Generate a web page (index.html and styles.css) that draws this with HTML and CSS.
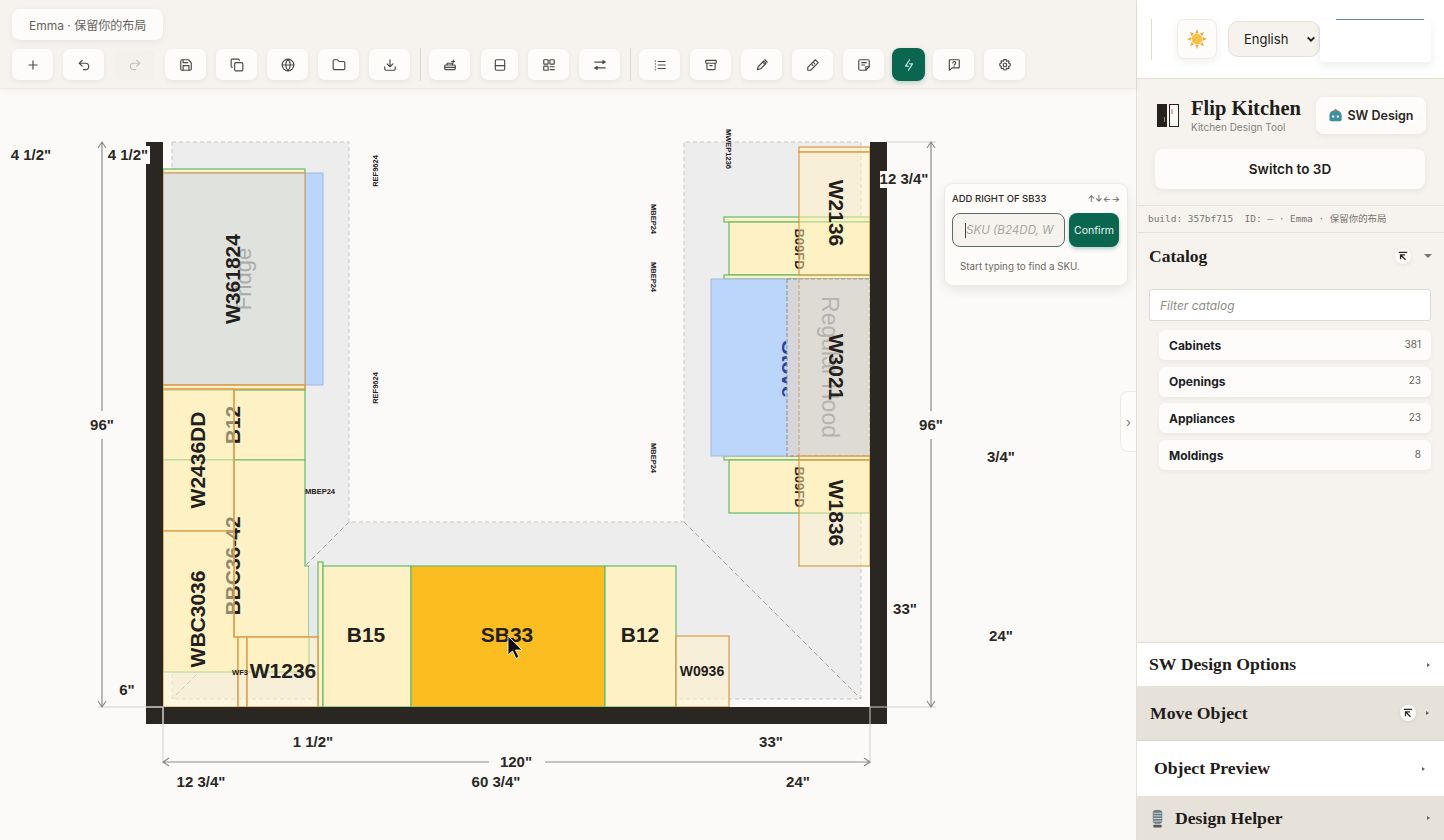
FILE: index.html
```html
<!DOCTYPE html>
<html lang="en">
<head>
  <meta charset="UTF-8">
  <meta name="viewport" content="width=device-width, initial-scale=1.0">
  <title>Flip Kitchen</title>
  <link rel="stylesheet" href="styles.css">
</head>
<body>
  <div class="app">
    <div class="workspace">
      <!-- top toolbar -->
      <header class="topbar">
        <div class="project__pill">Emma · 保留你的布局</div>
        <div class="toolbar">
          <button class="tool" type="button"><svg viewBox="0 0 24 24"><path d="M12 5v14M5 12h14"/></svg></button>
          <button class="tool" type="button"><svg viewBox="0 0 24 24"><path d="M9 14 4 9l5-5"/><path d="M4 9h10.5a5.5 5.5 0 0 1 0 11H11"/></svg></button>
          <button class="tool tool--off" type="button"><svg viewBox="0 0 24 24"><path d="m15 14 5-5-5-5"/><path d="M20 9H9.5a5.5 5.5 0 0 0 0 11H13"/></svg></button>
          <button class="tool" type="button"><svg viewBox="0 0 24 24"><path d="M5 3h11l5 5v11a2 2 0 0 1-2 2H5a2 2 0 0 1-2-2V5a2 2 0 0 1 2-2z"/><path d="M17 21v-8H7v8M7 3v5h8"/></svg></button>
          <button class="tool" type="button"><svg viewBox="0 0 24 24"><rect x="8" y="8" width="14" height="14" rx="2"/><path d="M4 16a2 2 0 0 1-2-2V4a2 2 0 0 1 2-2h10a2 2 0 0 1 2 2"/></svg></button>
          <button class="tool" type="button"><svg viewBox="0 0 24 24"><circle cx="12" cy="12" r="10"/><path d="M2 12h20M12 2a15 15 0 0 1 0 20 15 15 0 0 1 0-20"/></svg></button>
          <button class="tool" type="button"><svg viewBox="0 0 24 24"><path d="M20 20a2 2 0 0 0 2-2V8a2 2 0 0 0-2-2h-8L9.5 3H4a2 2 0 0 0-2 2v13a2 2 0 0 0 2 2z"/></svg></button>
          <button class="tool" type="button"><svg viewBox="0 0 24 24"><path d="M21 15v4a2 2 0 0 1-2 2H5a2 2 0 0 1-2-2v-4"/><path d="m7 10 5 5 5-5M12 15V3"/></svg></button>
          <span class="toolbar__sep"></span>
          <button class="tool" type="button"><svg viewBox="0 0 24 24"><rect x="3" y="12" width="18" height="8" rx="1.5"/><path d="M3 16h18M7 12V9h9v3M15 6h5M17.500 3.500v5"/></svg></button>
          <button class="tool tool--narrow" type="button"><svg viewBox="0 0 24 24"><rect x="4" y="3" width="16" height="18" rx="2"/><path d="M4 13h16"/></svg></button>
          <button class="tool tool--mid" type="button"><svg viewBox="0 0 24 24"><rect x="3" y="3" width="7.500" height="7.500" rx="1"/><rect x="13.500" y="3" width="7.500" height="7.500" rx="1"/><rect x="3" y="14" width="7.500" height="7" rx="1"/><path d="M14 15h7M14 20h7"/></svg></button>
          <button class="tool" type="button"><svg viewBox="0 0 24 24"><path d="M3 7h15M21 7l-4-2.500v5zM21 17H6M3 17l4-2.500v5z"/></svg></button>
          <span class="toolbar__sep"></span>
          <button class="tool" type="button"><svg viewBox="0 0 24 24"><path d="M9 6h12M9 12h12M9 18h12"/><path class="dot" d="M4 4v2M4 9v2M4 14v2M4 19v2"/></svg></button>
          <button class="tool" type="button"><svg viewBox="0 0 24 24"><rect x="3" y="4" width="18" height="5" rx="1.500"/><path d="M5 9v9a2 2 0 0 0 2 2h10a2 2 0 0 0 2-2V9M10 13h4"/></svg></button>
          <button class="tool" type="button"><svg viewBox="0 0 24 24"><path d="M4 20l1.500-5L15 5l4 4-9.500 9.500z"/><path d="M13 7l4 4M17 3l4 4"/></svg></button>
          <button class="tool" type="button"><svg viewBox="0 0 24 24"><path d="M16 3l5 5L8 21H3v-5z"/><path d="M13 8l2 2M10 11l2 2"/></svg></button>
          <button class="tool" type="button"><svg viewBox="0 0 24 24"><path d="M5 3h14a2 2 0 0 1 2 2v10l-6 6H5a2 2 0 0 1-2-2V5a2 2 0 0 1 2-2z"/><path d="M15 21v-6h6M8 8h8M8 12h5"/></svg></button>
          <button class="tool tool--active" type="button"><svg viewBox="0 0 24 24"><path d="M13 3 6 14h5M11 21l7-11h-5"/></svg></button>
          <button class="tool" type="button"><svg viewBox="0 0 24 24"><path d="M5 3h15a1 1 0 0 1 1 1v12a1 1 0 0 1-1 1H9l-5 4V4a1 1 0 0 1 1-1z"/><path d="M10 8.500a2.500 2.500 0 1 1 3 2.500l-.8 1M12.200 14.500h.1"/></svg></button>
          <button class="tool" type="button"><svg viewBox="0 0 24 24"><circle cx="12" cy="12" r="3"/><path d="M12 2.500l2 .4.800 2.600 2.500-.9 1.600 1.400-.9 2.500 2.600.9.400 2.100-.4 2.100-2.600.9.900 2.500-1.600 1.400-2.500-.9-.8 2.600-2 .4-2-.4-.8-2.600-2.500.9-1.600-1.400.9-2.500-2.600-.9-.4-2.100.4-2.100 2.600-.9-.9-2.500 1.600-1.400 2.500.9.800-2.600z"/></svg></button>
        </div>
      </header>

      <!-- floor plan -->
      <main class="canvas">
        <svg class="plan" viewBox="0 88 1136 752" width="1136" height="752">
          <!-- room shape -->
          <path class="room" d="M172 141H349V521H684V141H861V698H172Z"/>
          <path class="room__diag" d="M349 521 172 698M684 521 861 698"/>

          <!-- base cabinets -->
          <rect class="base" x="163" y="168" width="142" height="221"/>
          <rect class="base" x="163" y="389" width="142" height="70"/>
          <path class="base" d="M163 459H305V565H309V671H163Z"/>
          <rect class="gap" x="309" y="565" width="9" height="71"/>
          <rect class="base" x="318" y="561" width="5" height="145"/>
          <rect class="base" x="323" y="565" width="88" height="141"/>
          <rect class="base base--picked" x="411" y="565" width="194" height="141"/>
          <rect class="base" x="605" y="565" width="71" height="141"/>
          <rect class="base" x="724" y="216" width="146" height="5"/>
          <rect class="base" x="729" y="221" width="141" height="53"/>
          <rect class="base" x="724" y="274" width="146" height="4"/>
          <rect class="base" x="724" y="455" width="146" height="4"/>
          <rect class="base" x="729" y="459" width="141" height="53"/>

          <!-- fridge and stove -->
          <rect class="appliance" x="163" y="172" width="160" height="212"/>
          <rect class="appliance" x="711" y="278" width="159" height="177"/>
          <text class="lbl lbl--stove" transform="translate(789 368) rotate(90)">Stove</text>

          <!-- labels under wall cabinets -->
          <text class="lbl" transform="translate(232 424) rotate(-90)">B12</text>
          <text class="lbl" transform="translate(232 565) rotate(-90)">BBC36-42</text>
          <text class="lbl lbl--sm" transform="translate(799 248) rotate(90)">B09FD</text>
          <text class="lbl lbl--sm" transform="translate(799 486) rotate(90)">B09FD</text>

          <!-- hood -->
          <rect class="hood" x="787" y="278" width="83" height="177"/>

          <!-- wall cabinets -->
          <rect class="wall-cab wall-cab--grey" x="163" y="172" width="142" height="212"/>
          <rect class="wall-cab" x="163" y="384" width="142" height="4"/>
          <rect class="wall-cab" x="163" y="388" width="71" height="142"/>
          <path class="wall-cab" d="M163 530H234V636H238V706H163Z"/>
          <path class="wall-cab wall-cab--line" d="M234 388V636H318"/>
          <rect class="wall-cab" x="238" y="636" width="9" height="70"/>
          <rect class="wall-cab" x="247" y="636" width="71" height="70"/>
          <rect class="wall-cab" x="676" y="635" width="53" height="71"/>
          <rect class="wall-cab" x="799" y="146" width="71" height="5"/>
          <rect class="wall-cab" x="799" y="151" width="71" height="123"/>
          <rect class="wall-cab wall-cab--hood" x="799" y="278" width="71" height="177"/>
          <rect class="wall-cab" x="799" y="455" width="71" height="4"/>
          <rect class="wall-cab" x="799" y="459" width="71" height="106"/>

          <!-- appliance labels show through -->
          <text class="lbl lbl--fridge" transform="translate(243 278) rotate(-90)">Fridge</text>
          <text class="lbl lbl--hood" transform="translate(830 366) rotate(90)">Regular Hood</text>
          <circle class="spark" cx="829" cy="359" r="2.500"/>

          <!-- cabinet labels -->
          <text class="lbl" transform="translate(232 278) rotate(-90)">W361824</text>
          <text class="lbl" transform="translate(197 459) rotate(-90)">W2436DD</text>
          <text class="lbl" transform="translate(197 618) rotate(-90)">WBC3036</text>
          <text class="lbl" x="283" y="669">W1236</text>
          <text class="lbl lbl--xs" x="240" y="671">WF3</text>
          <text class="lbl" x="366" y="633">B15</text>
          <text class="lbl" x="507" y="633">SB33</text>
          <text class="lbl" x="640" y="633">B12</text>
          <text class="lbl lbl--mid" x="702" y="670">W0936</text>
          <text class="lbl" transform="translate(836 212) rotate(90)">W2136</text>
          <text class="lbl" transform="translate(836 366) rotate(90)">W3021</text>
          <text class="lbl" transform="translate(836 512) rotate(90)">W1836</text>

          <!-- moldings -->
          <text class="lbl lbl--xs" transform="translate(375 170) rotate(-90)">REF9624</text>
          <text class="lbl lbl--xs" transform="translate(375 387) rotate(-90)">REF9624</text>
          <text class="lbl lbl--xs" transform="translate(653 218) rotate(90)">MBEP24</text>
          <text class="lbl lbl--xs" transform="translate(653 276) rotate(90)">MBEP24</text>
          <text class="lbl lbl--xs" transform="translate(653 457) rotate(90)">MBEP24</text>
          <text class="lbl lbl--xs" transform="translate(728 148) rotate(90)">MWEP1236</text>
          <text class="lbl lbl--xs" x="320" y="490">MBEP24</text>

          <!-- walls -->
          <path class="walls" d="M146 141H163V706H870V141H887V723H146Z"/>
          <path class="ext" d="M98 706H163M163 706V723M146 706H163M870 706H887M870 706V763M163 706V763M887 141H936M887 706H936"/>

          <!-- dimension lines -->
          <path class="dim" d="M102 142V410M102 438V706M98 147l4-6 4 6M98 700l4 6 4-6"/>
          <path class="dim" d="M931 142V410M931 438V706M927 147l4-6 4 6M927 700l4 6 4-6"/>
          <path class="dim" d="M163 761H489M545 761H870M169 757l-6 4 6 4M864 757l6 4-6 4"/>

          <text class="dimtxt" x="31" y="153">4 1/2"</text>
          <rect class="dimbg" x="106" y="145" width="44" height="18"/>
          <text class="dimtxt" x="128" y="153">4 1/2"</text>
          <text class="dimtxt" x="102" y="423">96"</text>
          <text class="dimtxt" x="127" y="688">6"</text>
          <text class="dimtxt" x="313" y="740">1 1/2"</text>
          <text class="dimtxt" x="771" y="740">33"</text>
          <text class="dimtxt" x="516" y="760">120"</text>
          <text class="dimtxt" x="201" y="780">12 3/4"</text>
          <text class="dimtxt" x="496" y="780">60 3/4"</text>
          <text class="dimtxt" x="798" y="780">24"</text>
          <rect class="dimbg" x="880" y="170" width="48" height="17"/>
          <text class="dimtxt" x="904" y="177">12 3/4"</text>
          <text class="dimtxt" x="931" y="423">96"</text>
          <text class="dimtxt" x="1001" y="455">3/4"</text>
          <text class="dimtxt" x="905" y="607">33"</text>
          <text class="dimtxt" x="1001" y="634">24"</text>

          <!-- cursor -->
          <path class="cursor" d="M508 635V654L512.500 650 516 657.500 519 656 515.500 649H522Z"/>
        </svg>

        <!-- add next to popup -->
        <div class="addbox">
          <div class="addbox__head">
            <span>ADD RIGHT OF SB33</span>
            <span class="addbox__keys">↑↓←→</span>
          </div>
          <div class="addbox__row">
            <div class="addbox__input"><i></i><span>SKU (B24DD, W</span></div>
            <button class="addbox__btn" type="button">Confirm</button>
          </div>
          <div class="addbox__hint">Start typing to find a SKU.</div>
        </div>

        <div class="collapse__tab">›</div>
      </main>
    </div>

    <!-- right panel -->
    <aside class="sidebar">
      <div class="side__top">
        <span class="side__rule"></span>
        <button class="theme__btn" type="button">
          <svg viewBox="0 0 24 24" width="20" height="20"><path class="sun__rays" d="M12 0l2 5h-4zM12 24l-2-5h4zM0 12l5-2v4zM24 12l-5 2v-4zM3.500 3.500l5 2-3 3zM20.500 20.500l-5-2 3-3zM3.500 20.500l2-5 3 3zM20.500 3.500l-2 5-3-3z"/><circle class="sun__core" cx="12" cy="12" r="6.500"/></svg>
        </button>
        <div class="lang">English<svg viewBox="0 0 12 12" width="10" height="10"><path d="M2 4l4 4 4-4"/></svg></div>
        <div class="account__box"></div>
      </div>

      <div class="brand">
        <div class="brand__row">
          <svg class="brand__logo" viewBox="0 0 22 23" width="22" height="23">
            <rect x="0" y="0" width="10" height="23" fill="#26211d"/>
            <rect x="7" y="13" width="1" height="5" fill="#a8815c"/>
            <rect x="12.500" y=".5" width="9" height="22" fill="#fbfaf7" stroke="#26211d"/>
            <rect x="14.500" y="5" width="1" height="5" fill="#c9673a"/>
          </svg>
          <div class="brand__text">
            <div class="brand__name">Flip Kitchen</div>
            <div class="brand__sub">Kitchen Design Tool</div>
          </div>
          <button class="sw__btn" type="button">
            <svg viewBox="0 0 16 16" width="15" height="15"><path d="M1.500 8a6.500 6 0 0 1 13 0v4a2 2 0 0 1-2 2h-9a2 2 0 0 1-2-2z" fill="#3f8ea3"/><rect x="6.500" y="1" width="3" height="3" rx="1.500" fill="#b9785a"/><circle cx="5.500" cy="9" r="1.300" fill="#dff1f5"/><circle cx="10.500" cy="9" r="1.300" fill="#dff1f5"/></svg>
            SW Design
          </button>
        </div>
        <button class="switch__btn" type="button">Switch to 3D</button>
      </div>

      <div class="build__bar">build: 357bf715  ID: — · Emma · 保留你的布局</div>

      <section class="catalog">
        <div class="catalog__head">
          <h2>Catalog</h2>
          <span class="popout"><svg viewBox="0 0 12 12" width="10" height="10"><path d="M1 1.500h10M3 10V4.500h5.500M3 4.500l6 6"/></svg></span>
          <span class="caret"></span>
        </div>
        <input class="catalog__filter" type="text" placeholder="Filter catalog">
        <div class="catalog__list">
          <div class="catalog__row"><b>Cabinets</b><span>381</span></div>
          <div class="catalog__row"><b>Openings</b><span>23</span></div>
          <div class="catalog__row"><b>Appliances</b><span>23</span></div>
          <div class="catalog__row"><b>Moldings</b><span>8</span></div>
        </div>
      </section>

      <div class="panel panel--options"><h3>SW Design Options</h3><span class="tri"></span></div>
      <div class="panel panel--move">
        <h3>Move Object</h3>
        <span class="popout"><svg viewBox="0 0 12 12" width="10" height="10"><path d="M1 1.500h10M3 10V4.500h5.500M3 4.500l6 6"/></svg></span>
        <span class="tri"></span>
      </div>
      <div class="panel panel--preview"><h3>Object Preview</h3><span class="tri"></span></div>
      <div class="panel panel--helper">
        <svg viewBox="0 0 14 18" width="15" height="19"><rect x="2.500" y="1" width="9" height="13" rx="3" fill="#6d7c82"/><path d="M3 4h8M3 6.500h8M3 9h8M3 11.500h8" stroke="#dfe3e2" stroke-width=".8"/><rect x="3" y="15" width="8" height="2.500" rx="1" fill="#55585a"/></svg>
        <h3>Design Helper</h3>
        <span class="tri"></span>
      </div>
    </aside>
  </div>
</body>
</html>
```

FILE: styles.css
```css
:root {
  --paper: #f6f3ee;
  --canvas: #fbfaf8;
  --ink: #1f1c19;
  --line: #e4e0d8;
  --teal: #0b6650;
  --panel-dark: #e6e2da;
  --serif: "Liberation Serif", serif;
  --sans: Inter, "Noto Sans CJK SC", sans-serif;
}

* {
  margin: 0;
  padding: 0;
  box-sizing: border-box;
}

body {
  font-family: var(--sans);
  background: var(--canvas);
  color: var(--ink);
  overflow: hidden;
}

button {
  font-family: inherit;
  border: 0;
  cursor: pointer;
}

.app {
  display: flex;
  width: 100vw;
  height: 100vh;
}

.workspace {
  flex: 1;
  min-width: 0;
  display: flex;
  flex-direction: column;
}

/* top bar */
.topbar {
  height: 89px;
  padding: 9px 12px 0;
  background: var(--paper);
  border-bottom: 1px solid #eeeae3;
  box-shadow: 0 2px 6px rgba(60, 50, 40, 0.05);
  position: relative;
  z-index: 2;
}

.project__pill {
  width: fit-content;
  height: 31px;
  padding: 0 17px;
  display: flex;
  align-items: center;
  font-size: 12px;
  color: #66625c;
  background: #fdfcfa;
  border-radius: 8px;
  box-shadow: 0 2px 6px rgba(60, 50, 40, 0.07);
}

.toolbar {
  display: flex;
  align-items: center;
  gap: 10px;
  margin-top: 8px;
  height: 33px;
}

.tool {
  width: 41px;
  height: 31px;
  flex: none;
  display: flex;
  align-items: center;
  justify-content: center;
  background: #fdfcfa;
  border-radius: 7px;
  box-shadow: 0 2px 5px rgba(60, 50, 40, 0.07);
}

.tool svg {
  width: 14px;
  height: 14px;
  fill: none;
  stroke: #4d4a46;
  stroke-width: 2;
  stroke-linecap: round;
  stroke-linejoin: round;
}

.tool .dot {
  stroke-width: 1.200;
}

.tool--off {
  background: #f4f1ec;
  box-shadow: none;
}

.tool--off svg {
  stroke: #c3c0ba;
}

.tool--narrow {
  width: 37px;
  margin-left: 1px;
}

.tool--mid {
  width: 41px;
}

.tool--active {
  width: 33px;
  height: 33px;
  background: var(--teal);
  border-radius: 8px;
  box-shadow: 0 2px 5px rgba(11, 102, 80, 0.25);
  margin: 0 -2px 0 -2px;
}

.tool--active svg {
  stroke: #bfe8da;
}

.toolbar__sep {
  width: 1px;
  height: 33px;
  flex: none;
  background: #dcd8d0;
  margin-right: -2px;
}

/* floor plan */
.canvas {
  flex: 1;
  position: relative;
  background: var(--canvas);
  overflow: hidden;
}

.plan {
  display: block;
}

.room {
  fill: #eeeded;
  stroke: #c9c8c6;
  stroke-dasharray: 4 3;
}

.room__diag {
  fill: none;
  stroke: #a5a4a2;
  stroke-dasharray: 5 3;
}

.base {
  fill: #fdf1c5;
  stroke: #62bb6a;
  stroke-width: 1.200;
}

.base--picked {
  fill: #fcbd21;
}

.gap {
  fill: #e8e9ec;
}

.appliance {
  fill: #bcd6fb;
  stroke: #a3b8dc;
}

.hood {
  fill: #d6d6da;
  stroke: #8c8c90;
  stroke-dasharray: 4 2;
}

.spark {
  fill: #e9e9ee;
}

.wall-cab {
  fill: rgba(255, 241, 194, 0.5);
  stroke: #dd9a45;
  stroke-width: 1.200;
}

.wall-cab--line {
  fill: none;
}

.wall-cab--grey {
  fill: #e0e3dd;
  stroke: #c39a5a;
}

.wall-cab--hood {
  fill: rgba(224, 220, 212, 0.78);
  stroke: #d3a673;
  stroke-dasharray: 4 2;
}

.lbl {
  font-family: "Liberation Sans", sans-serif;
  font-size: 21px;
  font-weight: 700;
  fill: #23201c;
  text-anchor: middle;
  dominant-baseline: central;
}

.lbl--sm {
  font-size: 13px;
}

.lbl--mid {
  font-size: 14px;
}

.lbl--xs {
  font-size: 7.500px;
}

.lbl--fridge {
  font-weight: 400;
  fill: #a9acab;
  font-size: 22px;
}

.lbl--hood {
  font-weight: 400;
  fill: #b5b3ae;
  font-size: 23px;
}

.lbl--stove {
  fill: #2442a0;
}

.walls {
  fill: #2a2622;
}

.ext {
  fill: none;
  stroke: #d2d0cc;
}

.dim {
  fill: none;
  stroke: #8d8c8a;
  stroke-width: 1.200;
}

.dimbg {
  fill: #fbfaf8;
}

.dimtxt {
  font-family: "Liberation Sans", sans-serif;
  font-size: 15px;
  font-weight: 700;
  fill: #2b2825;
  text-anchor: middle;
  dominant-baseline: central;
}

.cursor {
  fill: #111;
  stroke: #fff;
  stroke-width: 0.800;
}

/* popup beside the selected cabinet */
.addbox {
  position: absolute;
  left: 944px;
  top: 94px;
  width: 184px;
  height: 103px;
  padding: 7px;
  background: #fdfcfa;
  border: 1px solid #eeeae3;
  border-radius: 9px;
  box-shadow: 0 4px 12px rgba(60, 50, 40, 0.1);
}

.addbox__head {
  display: flex;
  justify-content: space-between;
  align-items: center;
  font-size: 9.500px;
  font-weight: 500;
  color: #2b2825;
  height: 14px;
}

.addbox__keys {
  color: #66625c;
  font-size: 9px;
}

.addbox__row {
  display: flex;
  gap: 4px;
  margin-top: 8px;
}

.addbox__input {
  width: 113px;
  height: 34px;
  display: flex;
  align-items: center;
  padding-left: 12px;
  overflow: hidden;
  white-space: nowrap;
  font-size: 11.600px;
  font-style: italic;
  color: #aaa7a1;
  background: var(--paper);
  border: 1.500px solid #5d6a64;
  border-radius: 8px;
}

.addbox__input i {
  width: 1px;
  height: 15px;
  flex: none;
  background: #444;
}

.addbox__btn {
  width: 50px;
  height: 34px;
  font-size: 10.500px;
  color: #eaf6f1;
  background: var(--teal);
  border-radius: 8px;
  box-shadow: 0 2px 4px rgba(11, 102, 80, 0.3);
}

.addbox__hint {
  margin: 14px 0 0 8px;
  font-size: 9.800px;
  color: #6b6864;
}

.collapse__tab {
  position: absolute;
  right: 0;
  top: 302px;
  width: 16px;
  height: 61px;
  display: flex;
  align-items: center;
  justify-content: center;
  font-size: 13px;
  color: #77736d;
  background: #fdfcfa;
  border: 1px solid #eeeae3;
  border-right: 0;
  border-radius: 8px 0 0 8px;
}

/* right panel */
.sidebar {
  width: 308px;
  flex: none;
  display: flex;
  flex-direction: column;
  background: var(--paper);
  border-left: 1px solid var(--line);
}

.side__top {
  height: 79px;
  display: flex;
  align-items: center;
  padding-left: 14px;
  background: #fff;
  border-bottom: 1px solid var(--line);
  position: relative;
}

.side__rule {
  width: 1px;
  height: 41px;
  background: #dedbd5;
}

.theme__btn {
  width: 40px;
  height: 40px;
  margin-left: 25px;
  display: flex;
  align-items: center;
  justify-content: center;
  background: #fdfcfa;
  border-radius: 8px;
  border: 1px solid #f0ede7;
  box-shadow: 0 3px 8px rgba(60, 50, 40, 0.08);
}

.sun__rays {
  fill: #efa83a;
}

.sun__core {
  fill: #f8c246;
}

.lang {
  width: 92px;
  height: 36px;
  margin-left: 11px;
  padding: 0 0 0 15px;
  display: flex;
  align-items: center;
  justify-content: space-between;
  font-size: 13px;
  background: var(--paper);
  border: 1px solid var(--line);
  border-radius: 10px;
}

.lang svg {
  margin-right: 3px;
  fill: none;
  stroke: #1f1c19;
  stroke-width: 2.200;
}

.account__box {
  position: absolute;
  left: 183px;
  top: 20px;
  width: 111px;
  height: 42px;
  background: #fff;
  border-radius: 4px;
  box-shadow: 0 4px 10px rgba(60, 50, 40, 0.09);
}

.account__box::before {
  content: "";
  position: absolute;
  left: 16px;
  right: 7px;
  top: -1px;
  height: 1px;
  background: #5c8a92;
}

.brand {
  height: 126px;
  padding: 18px 18px 0;
}

.brand__row {
  display: flex;
  align-items: flex-start;
}

.brand__logo {
  margin: 7px 12px 0 2px;
  flex: none;
}

.brand__text {
  flex: 1;
}

.brand__name {
  font-family: var(--serif);
  font-size: 20.500px;
  font-weight: 700;
  line-height: 22px;
}

.brand__sub {
  font-size: 10px;
  line-height: 13px;
  color: #85817b;
  margin-top: 2px;
}

.sw__btn {
  width: 110px;
  height: 37px;
  display: flex;
  align-items: center;
  justify-content: center;
  gap: 4px;
  font-size: 12.500px;
  font-weight: 600;
  color: #2b2825;
  background: #fdfcfa;
  border-radius: 8px;
  box-shadow: 0 2px 6px rgba(60, 50, 40, 0.07);
}

.switch__btn {
  display: block;
  width: 270px;
  height: 40px;
  margin-top: 15px;
  font-size: 13.500px;
  font-weight: 600;
  color: #1f1c19;
  background: #fdfcfa;
  border-radius: 8px;
  box-shadow: 0 2px 6px rgba(60, 50, 40, 0.07);
}

.build__bar {
  height: 28px;
  padding: 0 0 2px 11px;
  display: flex;
  align-items: center;
  white-space: pre;
  font-family: "DejaVu Sans Mono", "Noto Sans CJK SC", monospace;
  font-size: 9.450px;
  color: #77736d;
  border-top: 1px solid var(--line);
  border-bottom: 1px solid var(--line);
}

.catalog {
  flex: 1;
  padding: 0 12px 0 12px;
}

.catalog__head {
  height: 44px;
  margin-top: 1px;
  display: flex;
  align-items: center;
}

.catalog__head h2 {
  flex: 1;
  font-family: var(--serif);
  font-size: 17.500px;
  font-weight: 700;
}

.popout {
  width: 16px;
  height: 16px;
  display: flex;
  align-items: center;
  justify-content: center;
  background: #fdfcfa;
  border-radius: 50%;
  box-shadow: 0 1px 4px rgba(60, 50, 40, 0.1);
}

.popout svg {
  fill: none;
  stroke: #2b2825;
  stroke-width: 1.500;
}

.caret {
  width: 0;
  height: 0;
  margin: 0 0 0 13px;
  border-left: 4px solid transparent;
  border-right: 4px solid transparent;
  border-top: 4px solid #77736d;
}

.catalog__filter {
  display: block;
  width: 282px;
  height: 32px;
  margin-top: 11px;
  padding-left: 10px;
  font-family: inherit;
  font-size: 12px;
  background: #fff;
  border: 1px solid #dedbd5;
  border-radius: 3px;
}

.catalog__filter::placeholder {
  font-style: italic;
  color: #8f8b85;
}

.catalog__list {
  display: flex;
  flex-direction: column;
  gap: 6.700px;
  margin: 9px 0 0 10px;
}

.catalog__row {
  width: 272px;
  height: 30px;
  padding: 0 10px;
  display: flex;
  justify-content: space-between;
  align-items: center;
  background: #fdfcfa;
  border-radius: 6px;
  box-shadow: 0 2px 4px rgba(60, 50, 40, 0.06);
}

.catalog__row b {
  font-size: 12px;
  font-weight: 700;
  color: #1c1e26;
}

.catalog__row span {
  font-size: 10px;
  color: #66625c;
  margin-top: -3px;
}

.panel {
  display: flex;
  align-items: center;
  padding: 0 14px 0 12px;
}

.panel h3 {
  flex: 1;
  font-family: var(--serif);
  font-size: 17.700px;
  font-weight: 700;
}

.tri {
  width: 0;
  height: 0;
  border-top: 2px solid transparent;
  border-bottom: 2px solid transparent;
  border-left: 3px solid #66625c;
}

.panel--options {
  height: 44px;
  background: #fff;
  border-top: 1px solid var(--line);
}

.panel--move {
  height: 55px;
  padding-left: 13px;
  padding-right: 15px;
  background: var(--panel-dark);
  border-bottom: 1px solid #dad6cd;
}

.panel--move .popout {
  margin-right: 10px;
}

.panel--preview {
  height: 55px;
  padding-left: 17px;
  padding-right: 19px;
  background: #fff;
}

.panel--helper {
  height: 44px;
  padding-left: 13px;
  gap: 10px;
  background: var(--panel-dark);
}
```
